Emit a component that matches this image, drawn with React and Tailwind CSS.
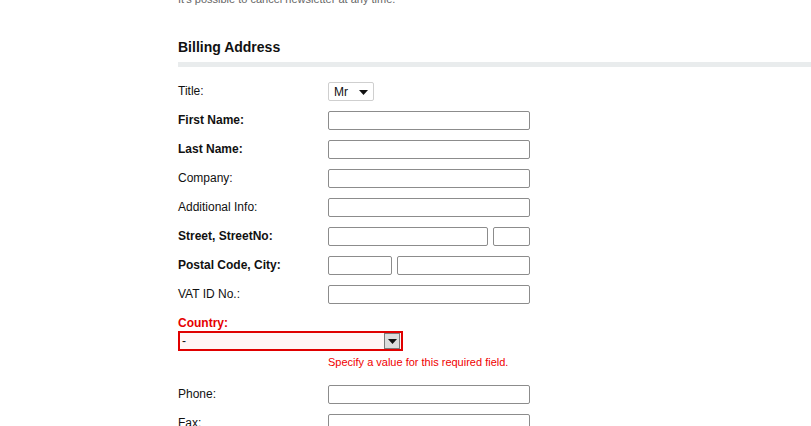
import React from "react";

const font = { fontFamily: '"Liberation Sans", Arial, sans-serif' };

function TextBox({ w = "w-[202px]" }) {
  return <input type="text" className={`${w} h-[19px] border border-[#8c8c8c] rounded-[2px] bg-white outline-none`} />;
}

function Row({ label, bold, children }) {
  return (
    <div className="flex items-center h-[19px]">
      <label className={`w-[150px] text-[12px] leading-[17px] text-[#111] ${bold ? "font-bold" : ""}`}>{label}</label>
      <div className="flex gap-[5px]">{children}</div>
    </div>
  );
}

function Caret({ className = "" }) {
  return (
    <svg width="9" height="5" viewBox="0 0 9 5" className={className}>
      <path d="M0 0h9L4.5 5z" fill="#111" />
    </svg>
  );
}

export default function App() {
  return (
    <div className="min-h-[426px] bg-white overflow-hidden pl-[178px]" style={font}>
      <p className="text-[11px] leading-[13px] text-[#666] -mt-[7px]">It's possible to cancel newsletter at any time.</p>

      <h2 className="mt-[33px] text-[14px] leading-[16px] font-bold text-[#111]">Billing Address</h2>
      <div className="mt-[7px] h-[5px] bg-[#e9eced]" />

      <div className="mt-[15px] flex flex-col gap-[10px]">
        <Row label="Title:">
          <div className="w-[46px] h-[19px] border border-[#cfcfcf] rounded-[2px] flex items-center justify-between pl-[5px] pr-[5px] text-[12px] text-[#111]">
            <span>Mr</span>
            <Caret className="mt-[2px]" />
          </div>
        </Row>
        <Row label="First Name:" bold><TextBox /></Row>
        <Row label="Last Name:" bold><TextBox /></Row>
        <Row label="Company:"><TextBox /></Row>
        <Row label="Additional Info:"><TextBox /></Row>
        <Row label="Street, StreetNo:" bold>
          <TextBox w="w-[160px]" />
          <TextBox w="w-[37px]" />
        </Row>
        <Row label="Postal Code, City:" bold>
          <TextBox w="w-[64px]" />
          <TextBox w="w-[133px]" />
        </Row>
        <Row label="VAT ID No.:"><TextBox /></Row>
      </div>

      <div className="mt-[12px] text-[12px] leading-[14px] font-bold text-[#e60000]">Country:</div>
      <div className="mt-[1px] w-[225px] h-[20px] border-2 border-[#e00000] bg-[#fff6f6] flex items-center justify-between pl-[2px] pr-[1px] text-[12px] text-[#111]">
        <span>-</span>
        <div className="w-[16px] h-[16px] border border-[#7a7a7a] bg-[#dcdcdc] flex items-center justify-center">
          <Caret />
        </div>
      </div>
      <p className="mt-[5px] ml-[150px] text-[11px] leading-[13px] text-[#f00000]">Specify a value for this required field.</p>

      <div className="mt-[16px] flex flex-col gap-[10px]">
        <Row label="Phone:"><TextBox /></Row>
        <Row label="Fax:"><TextBox /></Row>
      </div>
    </div>
  );
}
